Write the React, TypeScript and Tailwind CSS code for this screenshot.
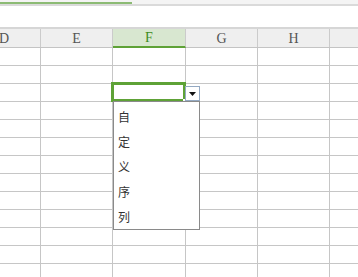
const cols = [
  { key: "D", w: "w-[73px]" },
  { key: "E", w: "w-[72px]" },
  { key: "F", w: "w-[73px]" },
  { key: "G", w: "w-[72px]" },
  { key: "H", w: "w-[72px]" },
  { key: "I", w: "w-[72px]" },
];

const rows = Array.from({ length: 13 });
const items = ["自", "定", "义", "序", "列"];

const App = () => {
  return (
    <div className="relative w-[358px] h-[277px] overflow-hidden bg-white">
      {/* Toolbar strip */}
      <div className="h-[2px] bg-[#f4f4f4]" />
      <div className="flex h-[2px]">
        <div className="w-[132px] bg-[#8cbb74]" />
        <div className="flex-1 bg-[#f4f4f4]" />
      </div>
      <div className="h-[2px] bg-[#dadada]" />
      <div className="h-[21px]" />

      {/* Sheet */}
      <div className="-ml-[32px]">
        <div className="h-[2px] bg-[#d6d6d6]" />
        <div className="flex h-[19px] bg-[#efefef] border-b border-[#c4c4c4]">
          {cols.map((c) => (
            <div
              key={c.key}
              className={`${c.w} shrink-0 flex items-center justify-center border-r border-[#cbcbcb] text-[14px] font-['Liberation_Serif',serif] ${
                c.key === "F"
                  ? "bg-[#d8e7d0] text-[#3d8b1d] border-b-2 border-b-[#5ea236] -mb-[1px]"
                  : "text-[#555]"
              }`}
            >
              {c.key === "I" ? "" : c.key}
            </div>
          ))}
        </div>
        {rows.map((_, r) => (
          <div key={r} className="flex h-[18px] border-b border-[#c6c6c6]">
            {cols.map((c) => (
              <div key={c.key} className={`${c.w} shrink-0 border-r border-[#c6c6c6]`} />
            ))}
          </div>
        ))}
      </div>

      {/* Active cell */}
      <div className="absolute left-[111px] top-[82px] w-[75px] h-[20px] border-[3px] border-[#5ea236]">
        <div className="absolute -right-[3px] -bottom-[3px] w-[3px] h-[3px] bg-white" />
      </div>

      {/* Dropdown button */}
      <div className="absolute left-[185px] top-[86px] w-[15px] h-[15px] bg-white border border-[#94a9c2] flex items-center justify-center">
        <svg width="7" height="4" viewBox="0 0 7 4">
          <path d="M0 0h7L3.5 4z" fill="#111" />
        </svg>
      </div>

      {/* Dropdown list */}
      <div className="absolute left-[113px] top-[101px] w-[87px] h-[129px] bg-white border border-[#8a8a8a] pt-[2px]">
        {items.map((t) => (
          <div
            key={t}
            className="h-[25px] leading-[25px] pl-[4px] text-[12px] text-[#333] font-['Noto_Sans_CJK_SC',sans-serif]"
          >
            {t}
          </div>
        ))}
      </div>
    </div>
  );
};

export default App;
